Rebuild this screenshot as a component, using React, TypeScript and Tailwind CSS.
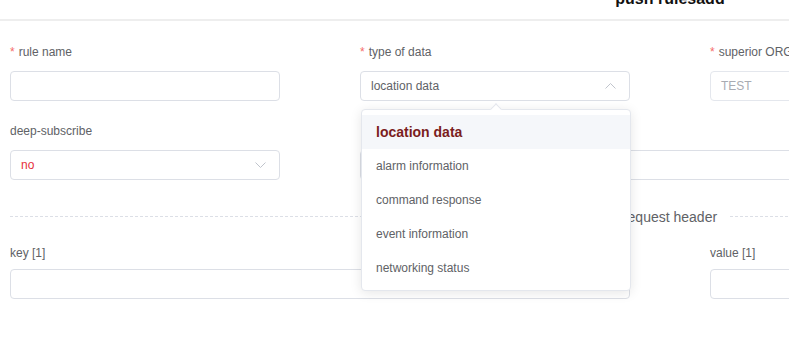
import React from "react";

const Chevron = ({ up }: { up?: boolean }) => (
  <svg width="11" height="6" viewBox="0 0 11 6" className="absolute right-[13px] top-1/2 -translate-y-1/2">
    <path d={up ? "M0.5 5.5 L5.5 0.5 L10.5 5.5" : "M0.5 0.5 L5.5 5.5 L10.5 0.5"} fill="none" stroke="#c0c4cc" strokeWidth="1" />
  </svg>
);

const Label = ({ text, req, className = "" }: { text: string; req?: boolean; className?: string }) => (
  <div className={`h-[20px] leading-[20px] text-[12px] text-[#606266] ${className}`}>
    {req && <span className="text-[#f56c6c] mr-[4px]">*</span>}
    {text}
  </div>
);

const Input = ({ children, className = "" }: { children?: React.ReactNode; className?: string }) => (
  <div className={`relative h-[30px] rounded-[4px] border border-[#dcdfe6] bg-white flex items-center px-[10px] text-[12px] ${className}`}>
    {children}
  </div>
);

export default function App() {
  const items = ["location data", "alarm information", "command response", "event information", "networking status"];
  return (
    <div className="relative w-[789px] h-[337px] overflow-hidden bg-white font-['Liberation_Sans',Arial,sans-serif]">
      <div className="w-[1340px]">
        <div className="h-[21px] border-b-2 border-[#eeeeee] flex justify-center">
          <div className="text-[16px] font-bold leading-[16px] -mt-[9px] text-[#111]">push rulesadd</div>
        </div>
        <div className="px-[10px] pt-[21px]">
          <div className="grid grid-cols-[270px_270px_270px] gap-x-[80px]">
            <div className="mb-[20px]">
              <Label text="rule name" req className="mb-[9px]" />
              <Input />
            </div>
            <div className="mb-[20px]">
              <Label text="type of data" req className="mb-[9px]" />
              <Input className="border-[#7b2828]">
                <span className="text-[#606266]">location data</span>
                <Chevron up />
              </Input>
            </div>
            <div className="mb-[20px]">
              <Label text="superior ORG" req className="mb-[9px]" />
              <Input className="bg-[#f5f7fa] border-[#e4e7ed]">
                <span className="text-[#a8abb2]">TEST</span>
              </Input>
            </div>

            <div className="mb-[20px]">
              <Label text="deep-subscribe" className="mb-[9px]" />
              <Input>
                <span className="text-[#e6303c]">no</span>
                <Chevron />
              </Input>
            </div>
            <div className="mb-[20px] col-span-2">
              <div className="h-[20px] mb-[9px]" />
              <Input />
            </div>
          </div>

          <div className="relative h-[1px] mt-[16px] mb-[26px] bg-[linear-gradient(to_right,#dcdfe6_3px,transparent_3px)] bg-[length:5px_1px]">
            <div className="absolute left-1/2 top-1/2 -translate-x-1/2 -translate-y-1/2 bg-white px-[12px] text-[14px] leading-[20px] text-[#606266] whitespace-nowrap">
              request header
            </div>
          </div>

          <div className="grid grid-cols-[270px_270px_270px] gap-x-[80px]">
            <div className="col-span-2">
              <Label text="key [1]" className="mb-[6px]" />
              <Input />
            </div>
            <div>
              <Label text="value [1]" className="mb-[6px]" />
              <Input />
            </div>
          </div>
        </div>
      </div>

      <div className="absolute left-[361px] top-[109px] w-[270px] h-[182px] rounded-[4px] border border-[#e4e7ed] bg-white shadow-[0_2px_12px_0_rgba(0,0,0,0.1)] py-[5px]">
        <div className="absolute left-[130px] -top-[5px] w-[8px] h-[8px] rotate-45 bg-white border-l border-t border-[#e4e7ed]" />
        {items.map((it, i) => (
          <div
            key={it}
            className={`relative h-[34px] leading-[34px] px-[14px] whitespace-nowrap ${
              i === 0 ? "bg-[#f5f7fa] text-[#7b1d1d] font-bold text-[14px]" : "text-[#606266] text-[12px]"
            }`}
          >
            {it}
          </div>
        ))}
      </div>
    </div>
  );
}
